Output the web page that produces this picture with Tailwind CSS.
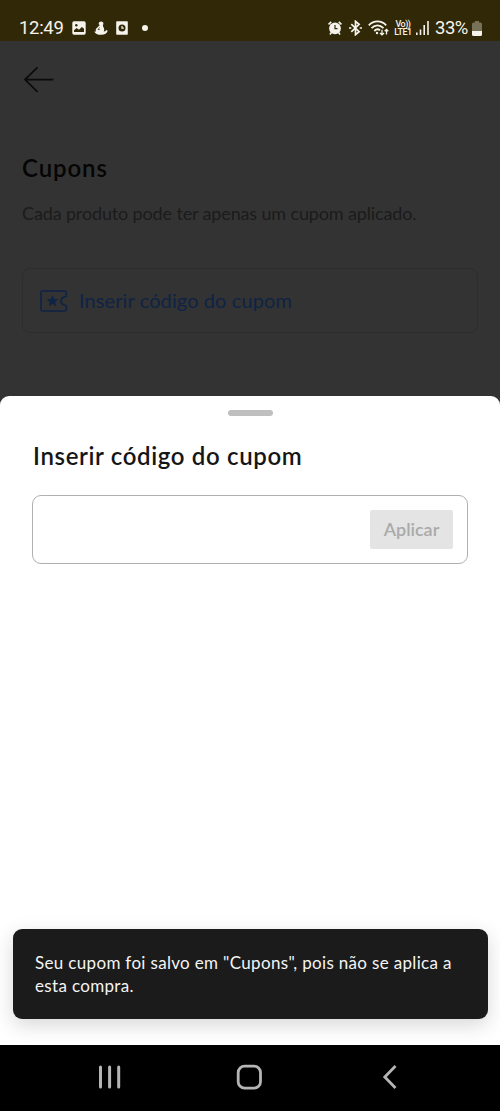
<!DOCTYPE html>
<html lang="pt-BR">
<head>
    <meta charset="UTF-8">
    <meta name="viewport" content="width=device-width, initial-scale=1.0">
    <title>Cupons</title>
    <script src="https://cdn.jsdelivr.net/npm/@tailwindcss/browser@4"></script>
</head>
<body class="bg-[#333333] font-['Lato',sans-serif]">
    <div class="flex flex-col w-[500px] h-[1111px] overflow-hidden">
        <!-- Status bar -->
        <header class="flex items-center justify-between h-[41px] shrink-0 bg-[#302806] pt-[15px] pl-[19px] pr-[18px] text-[#f5f3ec] font-['Roboto',sans-serif]">
            <div class="flex items-center">
                <span class="w-[53px] text-[18.5px] leading-[26px] tracking-[-0.3px] whitespace-nowrap">12:49</span>
                <svg class="w-[14px] h-[14px]" viewBox="0 0 14 14">
                    <rect x=".3" y=".3" width="13.4" height="13.4" rx="1.7" fill="currentColor"/>
                    <circle cx="4.3" cy="4.2" r="1.2" fill="#302806"/>
                    <path d="M2 11V9.200L4.700 7l2.200 1.800 3-2.800L12 7.800V11z" fill="#302806"/>
                </svg>
                <svg class="w-[14px] h-[14px] ml-2" viewBox="0 0 14 14" fill="currentColor">
                    <path d="M7.2.4c1.500 0 2.300 1 2.200 2.200 0 .9-.5 1.400-.5 2.100 0 1.200 1.300 1.800 1.300 3.700 0 .8-.2 1.400-.5 2 1.100.2 2-.3 2.700-1.400l1.300.7c-.7 2.500-2.800 4.100-6.500 4.100S1.200 12.700.3 10.400l1.900.2C1.500 9.600 1.500 8.300 2.300 7.500L5.100 4.700l.8-.8C4.900 3.800 4.600 3.200 4.700 2.400 4.900 1.200 5.700.4 7.200.4z"/>
                    <path d="M5.500 6.500 4 8.600h1.800" fill="none" stroke="#302806" stroke-width=".7"/>
                </svg>
                <svg class="w-[12px] h-[14px] ml-2" viewBox="0 0 12 14">
                    <rect x=".2" y=".2" width="11.600" height="13.600" rx=".8" fill="currentColor"/>
                    <circle cx="6" cy="7" r="3.500" fill="#302806"/>
                    <path d="M6 5v2.200h1.800" fill="none" stroke="currentColor" stroke-width="1.200"/>
                </svg>
                <span class="w-[6px] h-[6px] ml-[14px] rounded-full bg-[#f5f3ec]"></span>
            </div>
            <div class="flex items-center">
                <svg class="w-[14px] h-[14px]" viewBox="0 0 14 14" fill="none" stroke="currentColor">
                    <circle cx="7" cy="7.300" r="5.900" fill="currentColor" stroke="none"/>
                    <path d="M.5 3.300 3.300.8M13.500 3.300 10.700.8M3.600 11.300l-1.700 2.200M10.400 11.300l1.700 2.200" stroke-width="1.600"/>
                    <path d="M7 4v3.700h2.500" stroke="#302806" stroke-width="1.200"/>
                </svg>
                <svg class="w-[13px] h-[16px] ml-[7px]" viewBox="0 0 13 16" fill="none" stroke="currentColor" stroke-width="1.700">
                    <path d="m2.300 4.200 7.800 7.500-3.600 3V1.300l3.600 3-7.800 7.500"/>
                    <path d="M0 8h2.300M10.700 8H13"/>
                </svg>
                <svg class="w-[21px] h-[16px] ml-[6px]" viewBox="0 0 21 16" fill="none" stroke="currentColor" stroke-width="1.800">
                    <path d="M.8 5.300c5-5.200 12.400-5.200 17.400 0M3.500 8.200c3.700-3.800 8.300-3.800 12 0M6.300 11c2-2 4.200-2 5.700-.6"/>
                    <circle cx="9" cy="13" r="1.200" fill="currentColor" stroke="none"/>
                    <path d="M14 9.800v5M12 13l2 1.900 2-1.900M18.500 14.500v-5M16.700 11.300l1.800-1.800 1.800 1.800" stroke-width="1.300"/>
                </svg>
                <div class="flex flex-col items-center w-[18px] ml-[5px] text-[9px] leading-[8px] tracking-[-0.5px] font-medium whitespace-nowrap">
                    <span>Vo))</span>
                    <span>LTE1</span>
                </div>
                <svg class="w-[13px] h-[14px] ml-[4px]" viewBox="0 0 13 14" fill="currentColor">
                    <path d="M0 11.500h1.600V14H0zM3.700 8.500h1.600V14H3.700zM7.400 4H9v10H7.400zM11.200 0h1.600v14h-1.600z"/>
                </svg>
                <span class="ml-[6px] w-[36px] text-[18.5px] leading-[26px] tracking-[-0.5px] whitespace-nowrap">33%</span>
                <svg class="w-[10px] h-[15px] ml-[1px]" viewBox="0 0 10 15">
                    <path d="M3 0h4v1.500h1.500A1.500 1.500 0 0 1 10 3v7H0V3a1.500 1.500 0 0 1 1.500-1.500H3z" fill="#777158"/>
                    <path d="M0 10h10v3.500a1.500 1.500 0 0 1-1.500 1.500h-7A1.500 1.500 0 0 1 0 13.500z" fill="currentColor"/>
                </svg>
            </div>
        </header>

        <!-- Dimmed page -->
        <main class="h-[355px] shrink-0 px-[22px] pt-[25px]">
            <svg class="w-[32px] h-[28px]" viewBox="0 0 32 28" fill="none" stroke="#0b0b0b" stroke-width="1.700">
                <path d="M31.500 13.600H3M15.500 1.300 3 13.600l12.500 12.300"/>
            </svg>
            <h1 class="mt-[58px] text-[24px] leading-[32px] tracking-[0.9px] font-semibold text-[#050505] whitespace-nowrap">Cupons</h1>
            <p class="mt-[17px] text-[18px] leading-[24px] tracking-[-0.14px] text-[#1b1b1b] whitespace-nowrap">Cada produto pode ter apenas um cupom aplicado.</p>
            <button class="flex items-center w-[456px] h-[65px] mt-[43px] pl-[17px] rounded-[8px] border border-[#2d2d2d] text-[#0f2345]">
                <svg class="w-[28px] h-[22px]" viewBox="0 0 28 22" fill="none" stroke="currentColor" stroke-width="1.600">
                    <path d="M2.500 1h22.300a1.500 1.500 0 0 1 1.500 1.500v3.700l-2.300.7c-2 .7-3 2.200-3 4.100s1 3.400 3 4.100l2.300.7v3.700a1.500 1.500 0 0 1-1.500 1.500H2.500A1.500 1.500 0 0 1 1 19.500v-17A1.500 1.500 0 0 1 2.500 1z"/>
                    <path d="m12.500 5 1.700 3.900 4.100.4-3.100 2.800.9 4.100-3.600-2.200-3.600 2.200.9-4.100-3.100-2.800 4.100-.4z" fill="currentColor" stroke="none"/>
                </svg>
                <span class="ml-[11px] pb-px text-[20px] leading-[26px] tracking-[0.1px] whitespace-nowrap">Inserir código do cupom</span>
            </button>
        </main>

        <!-- Bottom sheet -->
        <section class="relative flex flex-col h-[649px] shrink-0 rounded-t-[9px] bg-white pt-[14px] px-[32px]">
            <div class="self-center w-[45px] h-[6px] rounded-full bg-[#bfbfbf]"></div>
            <h2 class="mt-[24px] pl-px text-[24px] leading-[32px] tracking-[0.65px] font-semibold text-[#161616] whitespace-nowrap">Inserir código do cupom</h2>
            <div class="flex items-center w-[436px] h-[69px] mt-[23px] pr-[14px] rounded-[9px] border border-[#b0b0b0]">
                <input type="text" class="flex-1 min-w-0 h-full px-4 text-[18px] outline-none">
                <button class="w-[83px] h-[39px] rounded-[2px] bg-[#e4e4e4] text-[18px] font-semibold text-[#aaaaaa]">Aplicar</button>
            </div>

            <!-- Toast -->
            <div class="absolute left-[12.5px] top-[533px] w-[475px] h-[90px] pt-[22px] pl-[22.5px] rounded-[9px] bg-[#1b1b1b] text-[17px] leading-[23px] tracking-[0.33px] text-[#f4f4f4] whitespace-nowrap shadow-[0_6px_20px_rgba(0,0,0,0.16)]">
                <p>Seu cupom foi salvo em "Cupons", pois não se aplica a</p>
                <p>esta compra.</p>
            </div>
        </section>

        <!-- Navigation bar -->
        <nav class="flex items-center h-[66px] shrink-0 bg-black pb-[2px] pl-[98px] text-[#b5b5b5]">
            <svg class="w-[24px] h-[24px]" viewBox="0 0 24 24" fill="none" stroke="currentColor" stroke-width="3" stroke-linecap="round">
                <path d="M2.500 2v20M11.600 2v20M20.700 2v20"/>
            </svg>
            <svg class="w-[26px] h-[26px] ml-[114px]" viewBox="0 0 26 26" fill="none" stroke="currentColor" stroke-width="2.800">
                <rect x="2.200" y="2.200" width="22.300" height="22" rx="6.500"/>
            </svg>
            <svg class="w-[16px] h-[26px] ml-[120px]" viewBox="0 0 16 26" fill="none" stroke="currentColor" stroke-width="2.800">
                <path d="M13.500 2 2.800 13l10.700 11"/>
            </svg>
        </nav>
    </div>
</body>
</html>
